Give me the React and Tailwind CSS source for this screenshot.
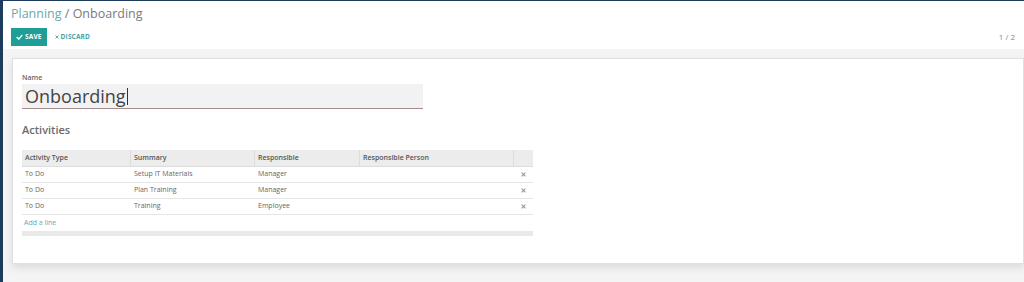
import React from "react";

const rows = [
    { type: "To Do", summary: "Setup IT Materials", responsible: "Manager" },
    { type: "To Do", summary: "Plan Training", responsible: "Manager" },
    { type: "To Do", summary: "Training", responsible: "Employee" },
];

const Check = () => (
    <svg width="7" height="6" viewBox="0 0 10 8" className="mr-[2px]">
        <path d="M1 4l3 3 5-6" stroke="white" strokeWidth="2" fill="none" />
    </svg>
);

const Cross = ({ color = "#6aa9aa", size = 5 }) => (
    <svg width={size} height={size} viewBox="0 0 8 8">
        <path d="M1 1l6 6M7 1l-6 6" stroke={color} strokeWidth="1.8" />
    </svg>
);

const App = () => {
    return (
        <div className="w-[1024px] h-[282px] overflow-hidden bg-[#f4f4f4] border-l-[3px] border-t border-[#1d3b5c] font-['Open_Sans',sans-serif] flex flex-col">
            {/* Control panel */}
            <div className="bg-white h-[48px] shrink-0 px-[8px] pt-[5px] relative">
                <div className="text-[12.5px] leading-[16px] text-[#7a7a7a]">
                    <span className="text-[#6aa9aa]">Planning</span> / Onboarding
                </div>
                <div className="flex items-center gap-[8px] mt-[6px]">
                    <div className="bg-[#1f9d97] h-[18px] px-[5px] flex items-center text-white text-[6.5px] font-bold tracking-wide">
                        <Check />
                        SAVE
                    </div>
                    <div className="flex items-center gap-[2px] text-[#4aa3a3] text-[6.5px] font-bold tracking-wide">
                        <Cross color="#4aa3a3" size={4} />
                        DISCARD
                    </div>
                </div>
                <div className="absolute right-[9px] top-[30px] text-[8px] text-[#888]">1 / 2</div>
            </div>

            {/* Form area */}
            <div className="pl-[9px] pt-[9px]">
                <div className="bg-white border border-[#e0e0e0] shadow-[0_4px_8px_rgba(0,0,0,0.1)] h-[206px] pl-[9px] pt-[14px]">
                    <div className="text-[7px] font-semibold text-[#666] leading-[9px]">Name</div>
                    <div className="w-[401px] h-[25px] bg-[#f3f2f2] border-b border-[#a58b8b] flex items-center pl-[3px] mt-[2px]">
                        <span className="text-[18px] text-[#444] leading-none">Onboarding</span>
                        <span className="w-px h-[17px] bg-[#333] ml-px" />
                    </div>

                    <div className="text-[11px] font-semibold text-[#6b6b6b] mt-[14px] leading-[14px]">Activities</div>

                    <div className="w-[511px] mt-[13px] text-[7px] text-[#666]">
                        <div className="flex h-[17px] bg-[#ececec] font-semibold text-[#555] border-b border-[#ddd]">
                            <div className="w-[109px] pl-[3px] flex items-center border-r border-[#dcdcdc]">Activity Type</div>
                            <div className="w-[124px] pl-[3px] flex items-center border-r border-[#dcdcdc]">Summary</div>
                            <div className="w-[105px] pl-[3px] flex items-center border-r border-[#dcdcdc]">Responsible</div>
                            <div className="w-[154px] pl-[3px] flex items-center border-r border-[#dcdcdc]">Responsible Person</div>
                            <div className="flex-1" />
                        </div>
                        {rows.map((r, i) => (
                            <div key={i} className="flex h-[16px] border-b border-[#e6e6e6]">
                                <div className="w-[109px] pl-[3px] flex items-center">{r.type}</div>
                                <div className="w-[124px] pl-[3px] flex items-center">{r.summary}</div>
                                <div className="w-[105px] pl-[3px] flex items-center">{r.responsible}</div>
                                <div className="w-[154px]" />
                                <div className="flex-1 flex items-center justify-center">
                                    <Cross color="#999" size={5} />
                                </div>
                            </div>
                        ))}
                        <div className="h-[16px] pl-[2px] flex items-center text-[#6aa9aa]">Add a line</div>
                        <div className="h-[5px] bg-[#e9e9e9]" />
                    </div>
                </div>
            </div>
        </div>
    );
};

export default App;
